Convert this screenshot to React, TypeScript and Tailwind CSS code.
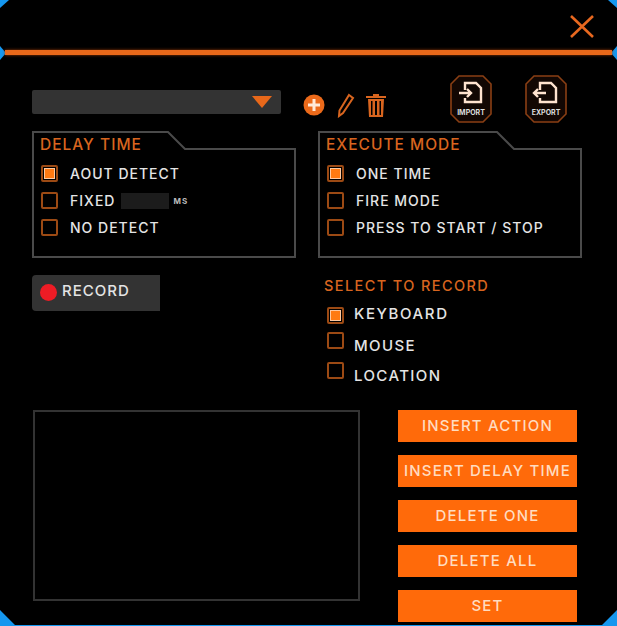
const font = 'font-["Inter","Liberation_Sans",sans-serif]';

function Check({ on = false }: { on?: boolean }) {
  return (
    <span className="flex h-[17px] w-[17px] shrink-0 items-center justify-center rounded-[2px] border-2 border-[#9c4a14]">
      {on && <span className="h-[9px] w-[9px] bg-[#ff7a12] shadow-[0_0_0_1px_#ffc9a0]" />}
    </span>
  );
}

function Option({ label, on, children }: { label: string; on?: boolean; children?: React.ReactNode }) {
  return (
    <div className="flex h-[27px] items-center">
      <Check on={on} />
      <span className="ml-[12px] text-[14px] font-medium leading-none tracking-[1px] text-[#e4e4e4]">{label}</span>
      {children}
    </div>
  );
}

function Panel({ title, notch, children }: { title: string; notch: number; children: React.ReactNode }) {
  return (
    <div className="relative h-[127px] w-[264px] pl-[8px] pt-[4px]">
      <svg className="absolute inset-0" width="264" height="127" fill="none">
        <path d={`M1 1H${notch}L${notch + 17} 18H263V126H1Z`} stroke="#4a4a4a" strokeWidth="2" />
      </svg>
      <div className="relative">
        <div className="mb-[5px] h-[20px] text-[15.5px] font-medium leading-[20px] tracking-[1px] text-[#d8651f]">{title}</div>
        <div className="ml-[1px]">{children}</div>
      </div>
    </div>
  );
}

function FileBadge({ label, flip }: { label: string; flip?: boolean }) {
  return (
    <div className="relative h-[48px] w-[42px]">
      <svg className="absolute inset-0" width="42" height="48" viewBox="0 0 42 48" fill="none">
        <path d="M9 1H33L41 9V39L33 47H9L1 39V9Z" fill="#120703" stroke="#8a3f14" strokeWidth="1.6" />
        <path d="M15 15V8H26L31 13V27H15V23" stroke="#ffe3cf" strokeWidth="2.4" />
        {flip ? (
          <path d="M21 18H9M13 14L9 18L13 22" stroke="#ffe3cf" strokeWidth="2.4" />
        ) : (
          <path d="M9 18H21M17 14L21 18L17 22" stroke="#ffe3cf" strokeWidth="2.4" />
        )}
      </svg>
      <span className="absolute inset-x-0 top-[33px] text-center text-[7px] font-bold leading-[9px] text-[#ddd]">
        {label}
      </span>
    </div>
  );
}

function ActionButton({ label }: { label: string }) {
  return (
    <button className="h-[32px] w-[179px] whitespace-nowrap bg-[#ff6a0a] pb-[2px] text-center text-[15px] font-medium leading-none tracking-[1.2px] text-[#ffdcc0]">
      {label}
    </button>
  );
}

function Corners() {
  return (
    <svg className="absolute inset-0" width="617" height="626" fill="#1597ef">
      <path d="M0 0H9L0 8Z" />
      <path d="M617 0H608L617 8Z" />
      <path d="M0 610L15 625H602L617 610V626H0Z" />
      <path d="M0 46L6 53L0 60Z" />
      <path d="M617 46L611 53L617 60Z" />
    </svg>
  );
}

export default function App() {
  return (
    <div className={`relative h-[626px] w-[617px] overflow-hidden bg-black ${font}`}>
      <Corners />
      <div className="relative">
        <header className="flex h-[50px] justify-end pr-[22px] pt-[14px]">
          <svg width="26" height="25" viewBox="0 0 26 25" fill="none" stroke="#e8681f" strokeWidth="2.6">
            <path d="M2 2L24 23M24 2L2 23" />
          </svg>
        </header>
        <div className="mx-[5px] h-[5px] bg-[#e8681a] shadow-[0_0_3px_#a03c08]" />

        <div className="mt-[20px] flex h-[48px] pl-[32px]">
          <div className="mt-[15px] flex h-[24px] w-[249px] items-center justify-end rounded-[2px] bg-[#333] pr-[9px]">
            <svg width="20" height="12" viewBox="0 0 20 12" fill="#e8681a">
              <path d="M0 0H20L10 12Z" />
            </svg>
          </div>
          <svg className="ml-[22px] mt-[19px]" width="22" height="22" viewBox="0 0 22 22">
            <circle cx="11" cy="11" r="10.5" fill="#ec6a1a" />
            <path d="M11 5V17M5 11H17" stroke="#ffe9d8" strokeWidth="3" />
          </svg>
          <svg className="ml-[12px] mt-[17px]" width="18" height="26" viewBox="0 0 18 26" fill="none" stroke="#d8651f" strokeWidth="2">
            <path d="M12 3L16 6L6 21L2 24L2.500 18.500Z" />
          </svg>
          <svg className="ml-[10px] mt-[18px]" width="22" height="24" viewBox="0 0 22 24" fill="#d8651f">
            <path d="M1 3H8V1H14V3H21V5H1ZM3 6H19L18 24H4ZM6 8V22H7.500V8ZM10 8V22H12V8ZM14.500 8V22H16V8Z" fillRule="evenodd" />
          </svg>
          <div className="ml-[63px]"><FileBadge label="IMPORT" /></div>
          <div className="ml-[33px]"><FileBadge label="EXPORT" flip /></div>
        </div>

        <div className="mt-[8px] flex gap-[22px] pl-[32px]">
          <Panel title="DELAY TIME" notch={136}>
            <Option label="AOUT DETECT" on />
            <Option label="FIXED">
              <span className="ml-[6px] h-[16px] w-[48px] bg-[#1c1c1c]" />
              <span className="ml-[4px] text-[8px] font-bold tracking-[1px] text-[#bbb]">MS</span>
            </Option>
            <Option label="NO DETECT" />
          </Panel>
          <Panel title="EXECUTE MODE" notch={179}>
            <Option label="ONE TIME" on />
            <Option label="FIRE MODE" />
            <Option label="PRESS TO START / STOP" />
          </Panel>
        </div>

        <div className="mt-[17px] flex h-[135px] pl-[32px]">
          <div className="flex h-[36px] w-[128px] items-center rounded-l-[4px] bg-[#333] pb-[4px] pl-[8px]">
            <span className="mt-[2px] h-[17px] w-[17px] rounded-full bg-[#ee1c25]" />
            <span className="ml-[5px] text-[15px] font-medium tracking-[1px] text-[#e4e4e4]">RECORD</span>
          </div>
          <div className="ml-[167px] pt-[2px]">
            <div className="ml-[-3px] text-[14.5px] font-medium leading-[18px] tracking-[1.4px] text-[#d8651f]">SELECT TO RECORD</div>
            <div className="mt-[8px] flex h-[24px] items-center">
              <Check on />
              <span className="ml-[10px] pb-[1px] text-[15px] font-medium tracking-[1.6px] text-[#e4e4e4]">KEYBOARD</span>
            </div>
            <div className="mt-[5px] flex h-[24px] items-start">
              <Check />
              <span className="ml-[10px] pt-[2px] text-[15px] font-medium leading-[24px] tracking-[1.4px] text-[#e4e4e4]">MOUSE</span>
            </div>
            <div className="mt-[6px] flex h-[24px] items-start">
              <Check />
              <span className="ml-[10px] pt-[2px] text-[15px] font-medium leading-[24px] tracking-[1.4px] text-[#e4e4e4]">LOCATION</span>
            </div>
          </div>
        </div>

        <div className="flex pl-[33px]">
          <div className="h-[191px] w-[327px] border-2 border-[#333]" />
          <div className="ml-[38px] flex flex-col gap-[13px]">
            <ActionButton label="INSERT ACTION" />
            <ActionButton label="INSERT DELAY TIME" />
            <ActionButton label="DELETE ONE" />
            <ActionButton label="DELETE ALL" />
            <ActionButton label="SET" />
          </div>
        </div>
      </div>
    </div>
  );
}
